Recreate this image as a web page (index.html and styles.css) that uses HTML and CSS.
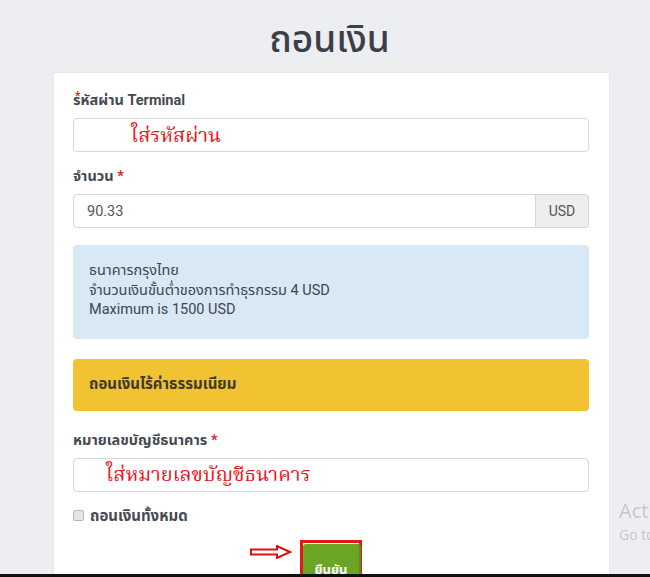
FILE: index.html
```html
<!DOCTYPE html>
<html lang="th">
<head>
<meta charset="utf-8">
<title>ถอนเงิน</title>
<link rel="stylesheet" href="styles.css">
</head>
<body>
<div class="page">
  <h1 class="title">ถอนเงิน</h1>
  <div class="card">
    <div class="field">
      <label class="label"><span class="star-over">*</span>รหัสผ่าน Terminal</label>
      <div class="input"><span class="hint hint-pass">ใส่รหัสผ่าน</span></div>
    </div>
    <div class="field">
      <label class="label">จำนวน <span class="star">*</span></label>
      <div class="group">
        <div class="input input-left"><span class="value">90.33</span></div>
        <div class="addon">USD</div>
      </div>
    </div>
    <div class="info">
      <div>ธนาคารกรุงไทย</div>
      <div>จำนวนเงินขั้นต่ำของการทำธุรกรรม 4 USD</div>
      <div>Maximum is 1500 USD</div>
    </div>
    <div class="warn">ถอนเงินไร้ค่าธรรมเนียม</div>
    <div class="field field-bank">
      <label class="label">หมายเลขบัญชีธนาคาร <span class="star">*</span></label>
      <div class="input"><span class="hint hint-bank">ใส่หมายเลขบัญชีธนาคาร</span></div>
    </div>
    <label class="check"><span class="box"></span>ถอนเงินทั้งหมด</label>
    <div class="actions">
      <svg class="arrow" width="42" height="14" viewBox="0 0 42 14"><path d="M1 4.5 H27 V1 L40 7 L27 13 V9.5 H1 Z" fill="none" stroke="#e01010" stroke-width="2"/></svg>
      <div class="btn-mark"><button class="btn">ยืนยัน</button></div>
    </div>
  </div>
</div>
<div class="watermark">
  <div class="wm-big">Activate Windows</div>
  <div class="wm-small">Go to Settings to activate Windows.</div>
</div>
<div class="bottom-bar"></div>
</body>
</html>
```
FILE: styles.css
```css
html, body {
  margin: 0;
  padding: 0;
  height: 100%;
  overflow: hidden;
}
body {
  background: #edeef1;
  font-family: Roboto, "Noto Sans Thai", "Noto Sans", sans-serif;
  color: #444;
  font-size: 13px;
}
.page {
  width: 557px;
  margin-left: 53px;
}
.title {
  margin: 0;
  height: 72px;
  padding-top: 19px;
  box-sizing: border-box;
  text-align: center;
  font-size: 37px;
  line-height: 42px;
  font-weight: 500;
  color: #3b4046;
  padding-right: 4px;
}
.card {
  background: #fff;
  border: 1px solid #e6e7ea;
  border-bottom: none;
  padding: 18px 20px 0 19px;
  min-height: 520px;
  box-sizing: border-box;
}
.field {
  margin-bottom: 15px;
}
.label {
  position: relative;
  display: block;
  font-weight: 700;
  font-size: 14.5px;
  line-height: 20px;
  color: #454a50;
  margin-bottom: 7px;
}
.star { color: #c9302c; }
.star-over {
  position: absolute;
  left: 2px;
  top: -5px;
  color: #c9302c;
  font-size: 12px;
}
.input {
  height: 34px;
  box-sizing: border-box;
  border: 1px solid #d4d6d9;
  border-radius: 4px;
  background: #fff;
  display: flex;
  align-items: center;
}
.hint {
  color: #e8141b;
  font-family: "Noto Serif Thai", "Liberation Serif", serif;
  font-size: 20px;
  padding-top: 3px;
}
.hint-pass { padding-left: 57px; }
.hint-bank { padding-left: 32px; }
.group {
  display: flex;
}
.input-left {
  flex: 1;
  border-radius: 4px 0 0 4px;
}
.value {
  padding-left: 13px;
  font-size: 14.5px;
  color: #555;
}
.addon {
  width: 53px;
  height: 34px;
  box-sizing: border-box;
  border: 1px solid #d4d6d9;
  border-left: none;
  border-radius: 0 4px 4px 0;
  background: #eeeeee;
  color: #555;
  font-size: 14px;
  display: flex;
  align-items: center;
  justify-content: center;
}
.info {
  margin-top: 17px;
  background: #d9e8f5;
  border-radius: 4px;
  padding: 16px 16px 19px;
  line-height: 19.5px;
  color: #3b4651;
  font-size: 14.5px;
}
.warn {
  margin-top: 20px;
  background: #f1c232;
  border-radius: 4px;
  height: 52px;
  padding-left: 16px;
  display: flex;
  align-items: center;
  font-weight: 700;
  font-size: 15px;
  color: #3d3a2c;
}
.field-bank {
  margin-top: 20px;
  margin-bottom: 14px;
}
.check {
  display: flex;
  align-items: center;
  font-weight: 700;
  color: #454a50;
  font-size: 15px;
  line-height: 20px;
}
.box {
  width: 9px;
  height: 9px;
  border: 1px solid #b5b8bc;
  border-radius: 2px;
  background: #e4e5e8;
  margin-right: 6px;
}
.actions {
  display: flex;
  align-items: flex-start;
  margin-top: 18px;
  padding-left: 177px;
}
.arrow {
  margin-top: 1px;
  margin-right: 8px;
}
.btn-mark {
  border: 3px solid #e01818;
  padding: 0;
  height: 40px;
  box-sizing: border-box;
  margin-top: -4px;
}
.btn {
  display: block;
  width: 56px;
  height: 40px;
  margin-top: 1px;
  border: none;
  border-radius: 3px;
  background: #6aa624;
  color: #fff;
  font-weight: 700;
  font-family: inherit;
  font-size: 13px;
  padding: 12px 0 0;
  box-shadow: 2px 0 0 #5b8f1d;
}
.watermark {
  position: fixed;
  left: 619px;
  top: 498px;
  white-space: nowrap;
  color: #c4c6c9;
  font-family: "Open Sans", sans-serif;
}
.wm-big { font-size: 20px; line-height: 26px; }
.wm-small { font-size: 14px; line-height: 22px; }
.bottom-bar {
  position: fixed;
  left: 0;
  right: 0;
  bottom: 0;
  height: 3px;
  background: #111;
}
```
